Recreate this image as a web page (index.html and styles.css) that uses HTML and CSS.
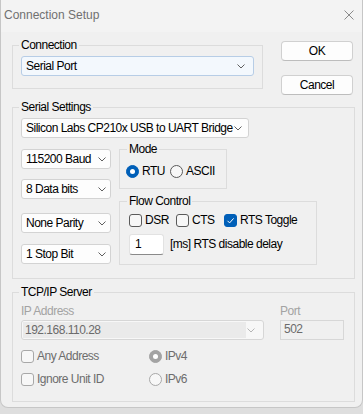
FILE: index.html
```html
<html>
    <head>
        <link rel="stylesheet" href="styles.css">
        <title>Connection Setup</title>
    </head>
    <body>
        <div class="window">
            <div class="titlebar">
                <span class="title">Connection Setup</span>
                <svg class="close" width="10" height="10" viewBox="0 0 10 10">
                    <path d="M0.5 0.5 L9.5 9.5 M9.5 0.5 L0.5 9.5" stroke="#8a8a8a" stroke-width="1" fill="none"/>
                </svg>
            </div>
            <div class="content">
                <div class="top-row">
                    <fieldset class="group group-conn">
                        <legend>Connection</legend>
                        <div class="combo combo-focus">
                            <span>Serial Port</span>
                            <svg class="chev" width="8" height="5" viewBox="0 0 8 5"><path d="M0.5 0.5 L4 4 L7.5 0.5" stroke="#5f5f5f" fill="none"/></svg>
                        </div>
                    </fieldset>
                    <div class="buttons">
                        <button class="btn">OK</button>
                        <button class="btn">Cancel</button>
                    </div>
                </div>

                <fieldset class="group group-serial">
                    <legend>Serial Settings</legend>
                    <div class="combo combo-port">
                        <span>Silicon Labs CP210x USB to UART Bridge</span>
                        <svg class="chev" width="8" height="5" viewBox="0 0 8 5"><path d="M0.5 0.5 L4 4 L7.5 0.5" stroke="#5f5f5f" fill="none"/></svg>
                    </div>
                    <div class="serial-body">
                        <div class="serial-left">
                            <div class="combo combo-small">
                                <span>115200 Baud</span>
                                <svg class="chev" width="8" height="5" viewBox="0 0 8 5"><path d="M0.5 0.5 L4 4 L7.5 0.5" stroke="#5f5f5f" fill="none"/></svg>
                            </div>
                            <div class="combo combo-small sel-data">
                                <span>8 Data bits</span>
                                <svg class="chev" width="8" height="5" viewBox="0 0 8 5"><path d="M0.5 0.5 L4 4 L7.5 0.5" stroke="#5f5f5f" fill="none"/></svg>
                            </div>
                            <div class="combo combo-small sel-parity">
                                <span>None Parity</span>
                                <svg class="chev" width="8" height="5" viewBox="0 0 8 5"><path d="M0.5 0.5 L4 4 L7.5 0.5" stroke="#5f5f5f" fill="none"/></svg>
                            </div>
                            <div class="combo combo-small sel-stop">
                                <span>1 Stop Bit</span>
                                <svg class="chev" width="8" height="5" viewBox="0 0 8 5"><path d="M0.5 0.5 L4 4 L7.5 0.5" stroke="#5f5f5f" fill="none"/></svg>
                            </div>
                        </div>
                        <div class="serial-right">
                            <fieldset class="group group-mode">
                                <legend>Mode</legend>
                                <div class="opts opts-mode">
                                    <label class="opt"><span class="radio radio-on"></span>RTU</label>
                                    <label class="opt"><span class="radio"></span>ASCII</label>
                                </div>
                            </fieldset>
                            <fieldset class="group group-flow">
                                <legend>Flow Control</legend>
                                <div class="opts opts-flow">
                                    <label class="opt"><span class="check"></span>DSR</label>
                                    <label class="opt"><span class="check"></span>CTS</label>
                                    <label class="opt"><span class="check check-on">
                                        <svg width="13" height="13" viewBox="0 0 13 13"><path d="M3.5 6.8 L5.6 8.9 L9.6 4.4" stroke="#fff" stroke-width="1" fill="none"/></svg>
                                    </span>RTS Toggle</label>
                                </div>
                                <div class="delay-row">
                                    <div class="textbox">1</div>
                                    <span class="delay-text">[ms] RTS disable delay</span>
                                </div>
                            </fieldset>
                        </div>
                    </div>
                </fieldset>

                <fieldset class="group group-tcp">
                    <legend>TCP/IP Server</legend>
                    <div class="tcp-fields">
                        <div class="ip-col">
                            <div class="field-label">IP Address</div>
                            <div class="combo combo-disabled">
                                <span class="ip-text">192.168.110.28</span>
                                <svg class="chev" width="8" height="5" viewBox="0 0 8 5"><path d="M0.5 0.5 L4 4 L7.5 0.5" stroke="#b5b5b5" fill="none"/></svg>
                            </div>
                        </div>
                        <div class="port-col">
                            <div class="field-label">Port</div>
                            <div class="textbox textbox-disabled">502</div>
                        </div>
                    </div>
                    <div class="opts-tcp">
                        <label class="opt opt-off"><span class="check check-off"></span>Any Address</label>
                        <label class="opt opt-off"><span class="radio radio-dis-on"></span>IPv4</label>
                        <label class="opt opt-off"><span class="check check-off"></span>Ignore Unit ID</label>
                        <label class="opt opt-off"><span class="radio radio-off"></span>IPv6</label>
                    </div>
                </fieldset>
            </div>
        </div>
    </body>
</html>
```

FILE: styles.css
```css
html, body {margin: 0;
            padding: 0;
            background: #dedede;}
body {font-family: "Liberation Sans", Arial, sans-serif;
      font-size: 12px;
      letter-spacing: -0.5px;
      line-height: 15px;
      color: #000;}

.window {width: 361px;
         height: 407px;
         background: #f0f0f0;
         border: 1px solid #c6c6c6;
         border-top: none;
         border-radius: 0 0 8px 8px;
         overflow: hidden;}

.titlebar {height: 30px;
           background: #f3f3f3;
           display: flex;
           align-items: center;
           justify-content: space-between;
           padding: 0 8px 2px 3px;}
.title {font-size: 12px;
        letter-spacing: 0;
        color: #707070;}

.content {padding: 6px 0 0 11px;}

/* group boxes */
.group {border: 1px solid #dcdcdc;
        margin: 0;
        padding: 0 8px;
        box-sizing: border-box;
        min-width: 0;}
.group legend {padding: 0 2px;
               margin-left: -2px;
               line-height: 15px;}

.top-row {display: flex;
          align-items: flex-start;}
.group-conn {width: 251px;
             padding-top: 3px;
             padding-bottom: 12px;}
.buttons {display: flex;
          flex-direction: column;
          gap: 14px;
          margin: 3px 0 0 18px;}
.btn {width: 72px;
      height: 20px;
      font: inherit;
      letter-spacing: inherit;
      background: #fdfdfd;
      border: 1px solid #d0d0d0;
      border-bottom-color: #bdbdbd;
      border-radius: 4px;
      padding: 0;}

/* combo boxes */
.combo {display: flex;
        align-items: center;
        justify-content: space-between;
        height: 20px;
        box-sizing: border-box;
        padding: 0 6px 0 4px;
        background: #fdfdfd;
        border: 1px solid #d3d3d3;
        border-radius: 3px;
        white-space: nowrap;}
.combo-focus {background: #f3f8fd;
              border-color: #b7cde6;
              padding-right: 8px;}
.combo-port {width: 228px;}
.combo-small {width: 90px;
              padding-right: 4px;}
.chev {flex: none;}

.group-serial {width: 343px;
               margin-top: 5px;
               padding-top: 3px;
               padding-bottom: 13px;}
.serial-body {display: flex;
              align-items: flex-start;
              gap: 8px;
              margin-top: 4px;}
.serial-left {display: flex;
              flex-direction: column;
              padding-top: 7px;}
.sel-data {margin-top: 10px;}
.sel-parity {margin-top: 14px;}
.sel-stop {margin-top: 11px;}

.group-mode {width: 108px;
             padding: 7px 6px 10px 6px;}
.group-mode legend {margin-left: 1px;}
.group-flow {width: 198px;
             margin-top: 5px;
             padding: 4px 9px 9px 9px;}

/* radios and checkboxes */
.opts {display: grid;
       height: 14px;}
.opts-mode {grid-template-columns: 44px auto;}
.opts-flow {grid-template-columns: 47px 48px auto;}
.opt {display: flex;
      align-items: center;
      gap: 3px;
      height: 14px;
      white-space: nowrap;}
.radio {width: 13px;
        height: 13px;
        box-sizing: border-box;
        border: 1px solid #5a5a5a;
        border-radius: 50%;
        background: #f7f7f7;
        flex: none;
        display: flex;
        align-items: center;
        justify-content: center;}
.radio-on {background: #005fb8;
           border-color: #005fb8;}
.radio-on::after {content: "";
                  width: 5px;
                  height: 5px;
                  border-radius: 50%;
                  background: #fff;}
.radio-off {border-color: #a8a8a8;}
.radio-dis-on {background: #a3a3a3;
               border-color: #a3a3a3;}
.radio-dis-on::after {content: "";
                      width: 5px;
                      height: 5px;
                      border-radius: 50%;
                      background: #fff;}
.check {width: 13px;
        height: 13px;
        box-sizing: border-box;
        border: 1px solid #5a5a5a;
        border-radius: 3px;
        background: #f7f7f7;
        flex: none;}
.check-on {background: #005fb8;
           border-color: #005fb8;
           display: flex;
           align-items: center;
           justify-content: center;}
.check-on svg {margin: -1px;}
.check-off {border-color: #a8a8a8;}

.delay-row {display: flex;
            align-items: center;
            gap: 6px;
            margin-top: 7px;}
.textbox {width: 35px;
          height: 21px;
          box-sizing: border-box;
          background: #fff;
          border: 1px solid #e2e2e2;
          border-bottom-color: #8a8a8a;
          border-radius: 3px;
          padding: 2px 5px;}

/* tcp/ip */
.group-tcp {width: 343px;
            margin-top: 6px;
            padding-top: 4px;
            padding-bottom: 15px;}
.tcp-fields {display: flex;
             gap: 16px;}
.field-label {color: #a3a3a3;
              margin-bottom: 1px;}
.combo-disabled {width: 243px;
                 background: #f7f7f7;
                 border-color: #d6d6d6;
                 padding: 0 8px 0 1px;}
.ip-text {background: #eaeaea;
          color: #6b6b6b;
          width: 221px;
          height: 16px;
          line-height: 16px;
          padding-left: 2px;}
.textbox-disabled {width: 64px;
                   height: 20px;
                   background: #f0f0f0;
                   border: 1px solid #d7d7d7;
                   border-radius: 0;
                   color: #6b6b6b;
                   padding: 1px 3px;}
.opts-tcp {display: grid;
           grid-template-columns: 128px auto;
           row-gap: 9px;
           margin-top: 9px;}
.opt-off {color: #6d6d6d;}
```
